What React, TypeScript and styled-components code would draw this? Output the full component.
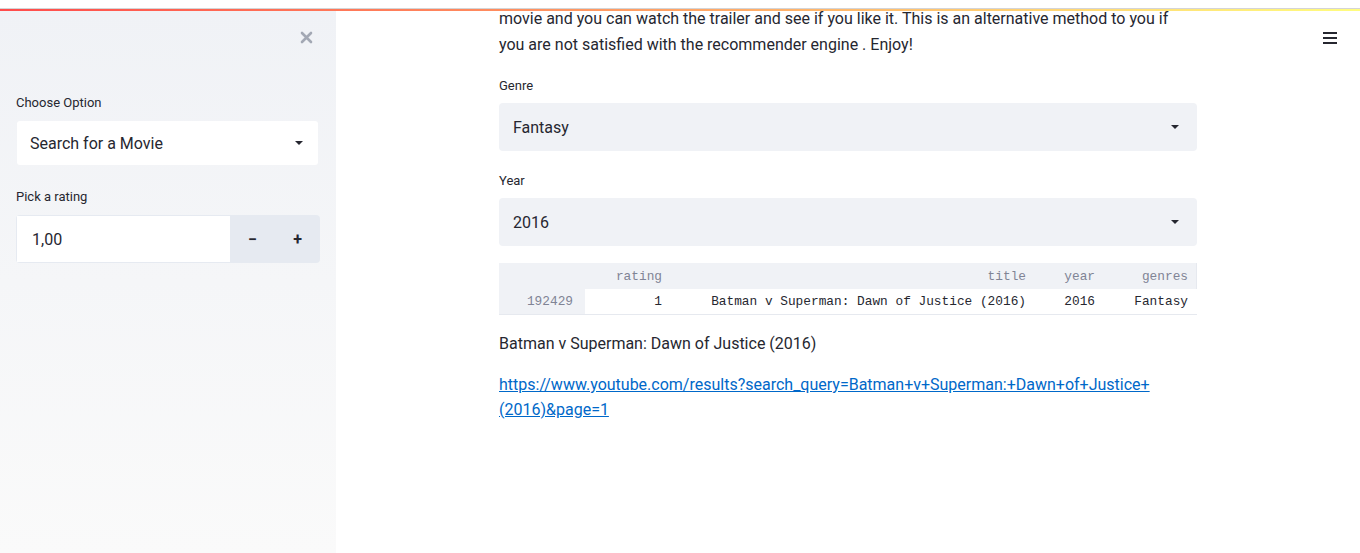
import React from "react";
import styled, { createGlobalStyle } from "styled-components";

const GlobalStyle = createGlobalStyle`
  html, body {
    margin: 0;
    padding: 0;
    height: 100%;
    background: #ffffff;
    overflow: hidden;
  }
  body {
    font-family: Roboto, "Liberation Sans", sans-serif;
    color: #262730;
  }
  * {
    box-sizing: border-box;
  }
`;

const Page = styled.div`
  display: flex;
  flex-direction: column;
  width: 1360px;
  height: 553px;
`;

const TopSpace = styled.div`
  height: 9px;
  background: #ffffff;
  border-bottom: 1px solid #d4d4d6;
  flex-shrink: 0;
`;

const Decoration = styled.div`
  height: 2px;
  flex-shrink: 0;
  background: linear-gradient(90deg, #ff4b4b, #fffd80);
`;

const Body = styled.div`
  display: flex;
  flex: 1;
  min-height: 0;
`;

const Sidebar = styled.aside`
  width: 336px;
  flex-shrink: 0;
  background-image: linear-gradient(#f0f2f6, #fafafa);
  padding: 0 16px;
  display: flex;
  flex-direction: column;
`;

const SidebarTop = styled.div`
  display: flex;
  justify-content: flex-end;
  padding-top: 18px;
  padding-right: 6px;
  height: 62px;
`;

const CloseButton = styled.div`
  width: 16px;
  height: 16px;
  display: flex;
  align-items: center;
  justify-content: center;
`;

const Label = styled.div<{ $top: number }>`
  font-size: 13px;
  line-height: 20px;
  color: #262730;
  margin-top: ${(p) => p.$top}px;
  margin-bottom: 8px;
`;

const SideSelect = styled.div`
  height: 44px;
  margin-left: 1px;
  margin-right: 2px;
  background: #ffffff;
  border-radius: 3px;
  display: flex;
  align-items: center;
  justify-content: space-between;
  padding: 0 14px 0 13px;
  font-size: 16px;
`;

const NumberInput = styled.div`
  display: flex;
  height: 48px;
  border-radius: 4px;
  overflow: hidden;
  background: #e6eaf1;
`;

const NumberField = styled.div`
  flex: 1;
  margin: 1px 0 1px 1px;
  background: #ffffff;
  display: flex;
  align-items: center;
  padding-left: 15px;
  font-size: 16px;
`;

const StepButton = styled.div`
  width: 45px;
  display: flex;
  align-items: center;
  justify-content: center;
  font-size: 16px;
  font-weight: 700;
  color: #262730;
`;

const Main = styled.main`
  flex: 1;
  position: relative;
  overflow: hidden;
  display: flex;
  justify-content: center;
`;

const Column = styled.div`
  width: 698px;
  display: flex;
  flex-direction: column;
`;

const Paragraph = styled.p<{ $top: number }>`
  margin: ${(p) => p.$top}px 0 0 0;
  font-size: 16px;
  line-height: 26px;
`;

const MainLabel = styled.div<{ $top: number }>`
  font-size: 13px;
  line-height: 20px;
  margin-top: ${(p) => p.$top}px;
  margin-bottom: 7px;
`;

const Select = styled.div`
  height: 48px;
  background: #f0f2f6;
  border-radius: 4px;
  display: flex;
  align-items: center;
  justify-content: space-between;
  padding: 0 17px 0 14px;
  font-size: 16px;
`;

const Table = styled.div`
  margin-top: 17px;
  display: grid;
  grid-template-columns: 86px 89px 364px 69px 90px;
  background: #f0f2f6;
  font-family: "Liberation Mono", "DejaVu Sans Mono", monospace;
  font-size: 12.8px;
  border-right: 1px solid #e6e9ef;
  border-bottom: 1px solid #e6e9ef;
`;

const Cell = styled.div<{ $kind: "head" | "index" | "body" }>`
  text-align: right;
  padding-right: 12px;
  white-space: nowrap;
  display: flex;
  align-items: center;
  justify-content: flex-end;
  height: ${(p) => (p.$kind === "head" ? 26 : 25)}px;
  color: ${(p) => (p.$kind === "body" ? "#262730" : "#808495")};
  background: ${(p) => (p.$kind === "body" ? "#ffffff" : "transparent")};
  &:nth-child(5n) {
    padding-right: 9px;
  }
`;

const LinkText = styled.a`
  margin-top: 15px;
  font-size: 16px;
  line-height: 25px;
  color: #0068c9;
  text-decoration: underline;
  word-break: normal;
  overflow-wrap: normal;
`;

const MenuButton = styled.div`
  position: absolute;
  top: 21px;
  right: 23px;
  width: 14px;
  display: flex;
  flex-direction: column;
  gap: 3px;
`;

const MenuLine = styled.span`
  display: block;
  height: 2px;
  background: #262730;
`;

const Caret = () => (
  <svg width="10" height="6" viewBox="0 0 10 6">
    <path d="M1 1h8L5 5z" fill="#262730" />
  </svg>
);

const columns = ["", "rating", "title", "year", "genres"];
const row = ["192429", "1", "Batman v Superman: Dawn of Justice (2016)", "2016", "Fantasy"];

const App: React.FunctionComponent = () => (
  <Page>
    <GlobalStyle />
    <TopSpace />
    <Decoration />
    <Body>
      <Sidebar>
        <SidebarTop>
          <CloseButton>
            <svg width="13" height="13" viewBox="0 0 13 13">
              <path d="M2 2l9 9M11 2l-9 9" stroke="#a3a8b4" strokeWidth="2.6" strokeLinecap="round" />
            </svg>
          </CloseButton>
        </SidebarTop>
        <Label $top={20}>Choose Option</Label>
        <SideSelect>
          <span>Search for a Movie</span>
          <Caret />
        </SideSelect>
        <Label $top={22}>Pick a rating</Label>
        <NumberInput>
          <NumberField>1,00</NumberField>
          <StepButton>−</StepButton>
          <StepButton>+</StepButton>
        </NumberInput>
      </Sidebar>
      <Main>
        <Column>
          <Paragraph $top={-5}>
            movie and you can watch the trailer and see if you like it. This is an alternative method to you if
            you are not satisfied with the recommender engine . Enjoy!
          </Paragraph>
          <MainLabel $top={18}>Genre</MainLabel>
          <Select>
            <span>Fantasy</span>
            <Caret />
          </Select>
          <MainLabel $top={20}>Year</MainLabel>
          <Select>
            <span>2016</span>
            <Caret />
          </Select>
          <Table>
            {columns.map((c, i) => (
              <Cell key={"h" + i} $kind="head">
                {c}
              </Cell>
            ))}
            {row.map((c, i) => (
              <Cell key={"r" + i} $kind={i === 0 ? "index" : "body"}>
                {c}
              </Cell>
            ))}
          </Table>
          <Paragraph $top={16}>Batman v Superman: Dawn of Justice (2016)</Paragraph>
          <LinkText href="#">
            https://www.youtube.com/results?search_query=Batman+v+Superman:+Dawn+of+Justice+<wbr />
            (2016)&amp;page=1
          </LinkText>
        </Column>
        <MenuButton>
          <MenuLine />
          <MenuLine />
          <MenuLine />
        </MenuButton>
      </Main>
    </Body>
  </Page>
);

export default App;
